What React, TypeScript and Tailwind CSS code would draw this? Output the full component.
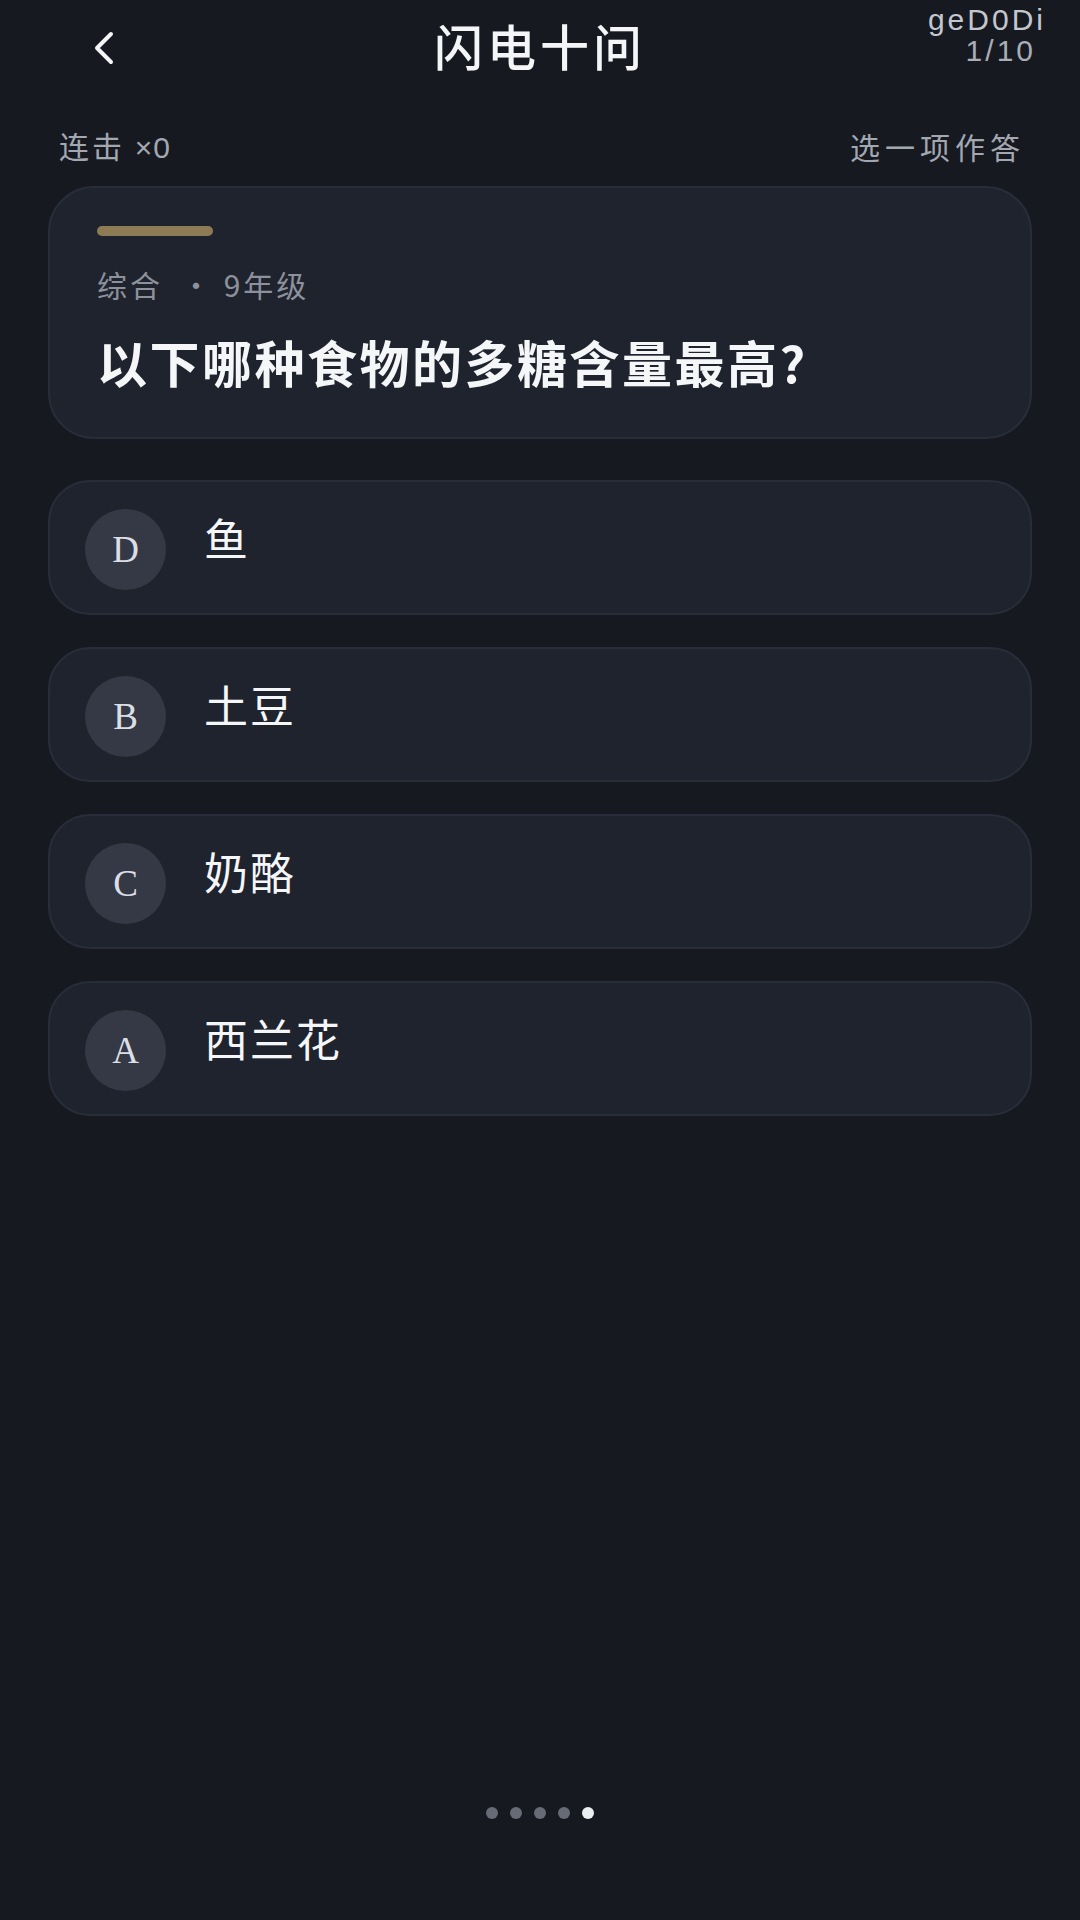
import React from 'react'

const options = [
  { key: 'D', text: '鱼' },
  { key: 'B', text: '土豆' },
  { key: 'C', text: '奶酪' },
  { key: 'A', text: '西兰花' },
]

export default function App() {
  return (
    <div
      className="w-[1080px] h-[1920px] bg-[#161920] text-white flex flex-col overflow-hidden"
      style={{ fontFamily: '"Noto Sans CJK SC", "Noto Sans", sans-serif' }}
    >
      {/* header */}
      <div className="relative h-[90px] flex items-center justify-center">
        <button className="absolute left-[88px] top-[28px] w-[32px] h-[40px] flex items-center justify-center">
          <svg width="26" height="36" viewBox="0 0 26 36" fill="none">
            <path d="M20 4 L6 18 L20 32" stroke="#f5f5f7" strokeWidth="4" strokeLinecap="round" strokeLinejoin="round" />
          </svg>
        </button>
        <h1 className="text-[49px] leading-none font-medium tracking-[4px] text-[#f4f5f7] mt-[-2px]">闪电十问</h1>
        <div
          className="absolute right-[34px] top-[4px] flex flex-col items-end text-[30px] leading-[31px] tracking-[3px] text-[#c4c7ce]"
          style={{ fontFamily: '"Liberation Sans", Arimo, sans-serif' }}
        >
          <span>geD0Di</span>
          <span className="mr-[10px] text-[#a9adb6]">1/10</span>
        </div>
      </div>

      {/* status row */}
      <div className="h-[40px] mt-[36px] px-[59px] flex items-center justify-between text-[30px] text-[#a3a7b0]">
        <span className="tracking-[3px]">
          连击 <span style={{ fontFamily: '"Liberation Sans", sans-serif' }} className="tracking-[1px]">×0</span>
        </span>
        <span className="tracking-[5px] mr-[-4px]">选一项作答</span>
      </div>

      {/* question card */}
      <div className="mx-[48px] mt-[20px] rounded-[46px] bg-[#1f232e] border-2 border-[#292d39] px-[47px] pt-[38px] pb-[47px]">
        <div className="w-[116px] h-[10px] rounded-full bg-[#8d7b56]" />
        <div className="mt-[30px] h-[36px] flex items-center text-[30px] tracking-[3px] text-[#8c919c]">
          <span>综合</span>
          <span className="ml-[18px]">· 9年级</span>
        </div>
        <div className="mt-[30px] text-[50px] leading-[58px] font-bold text-[#f5f6f8] tracking-[2.5px]">
          以下哪种食物的多糖含量最高?
        </div>
      </div>

      {/* options */}
      <div className="mx-[48px] mt-[41px] flex flex-col gap-[32px]">
        {options.map((o) => (
          <div
            key={o.key}
            className="h-[135px] rounded-[42px] bg-[#1f232e] border-2 border-[#292d39] flex items-center pl-[35px]"
          >
            <div
              className="w-[81px] h-[81px] mt-[4px] rounded-full bg-[#353946] flex items-center justify-center text-[37px] text-[#dcdee5]"
              style={{ fontFamily: '"Liberation Serif", "DejaVu Serif", serif' }}
            >
              {o.key}
            </div>
            <div className="ml-[38px] mt-[-22px] text-[44px] leading-none tracking-[2px] text-[#f5f6f8]">{o.text}</div>
          </div>
        ))}
      </div>

      {/* pager dots */}
      <div className="mt-auto mb-[101px] flex items-center justify-center gap-[12px]">
        <span className="w-[12px] h-[12px] rounded-full bg-[#676b76]" />
        <span className="w-[12px] h-[12px] rounded-full bg-[#676b76]" />
        <span className="w-[12px] h-[12px] rounded-full bg-[#676b76]" />
        <span className="w-[12px] h-[12px] rounded-full bg-[#676b76]" />
        <span className="w-[12px] h-[12px] rounded-full bg-[#eceef2]" />
      </div>
    </div>
  )
}
